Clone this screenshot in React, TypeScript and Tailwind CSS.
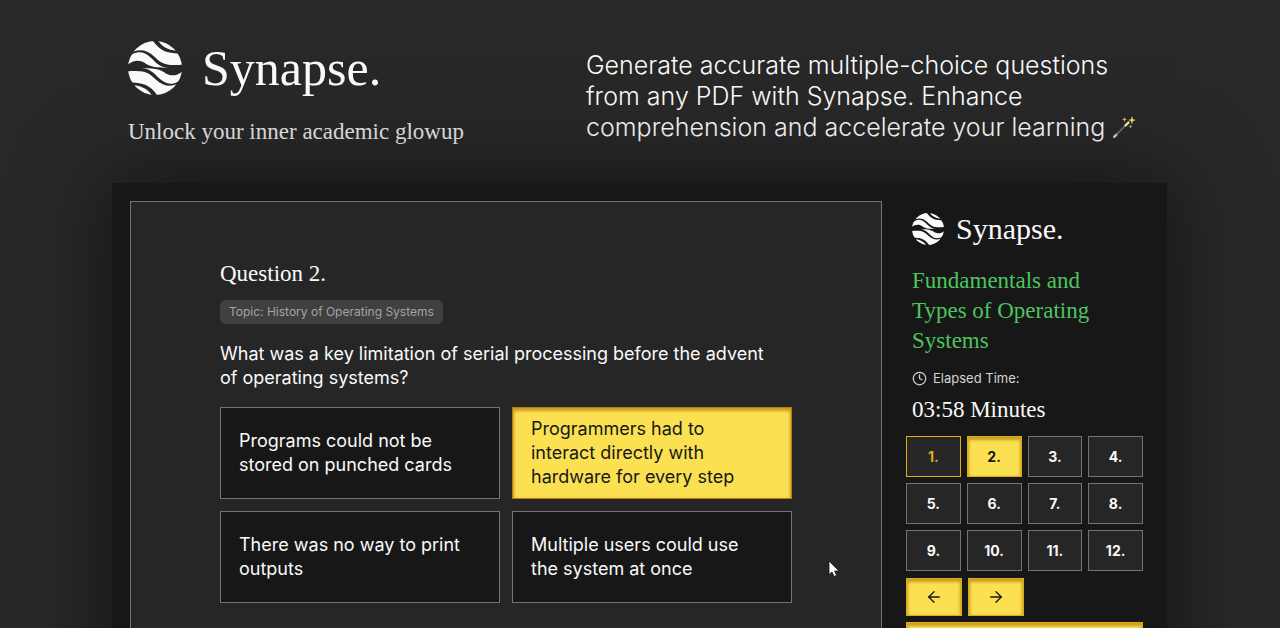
import { useState } from "react";
import { ArrowLeft, ArrowRight, Clock } from "lucide-react";

const serif = "font-['Liberation_Serif',serif]";
const sans = "font-['Inter',sans-serif]";

function Waves() {
  return (
    <>
      <path d="M91 0 C103 17 117 25 142 29 L150 0 Z" />
      <path d="M16 32 C36 24 58 27 77 45 C99 67 111 76 164 71 L164 38 C118 37 98 32 75 0 L16 0 Z" />
      <path d="M0 70 C16 57 36 54 55 69 C73 80 92 80 121 80 C104 79 94 74 81 62 C62 43 50 34 34 34 C22 34 8 40 0 52 Z" />
    </>
  );
}

function LogoMark({ className }: { className: string }) {
  return (
    <svg viewBox="0 0 162 162" className={className} fill="currentColor" aria-hidden="true">
      <defs>
        <clipPath id="globe">
          <circle cx="81" cy="81" r="81" />
        </clipPath>
      </defs>
      <g clipPath="url(#globe)">
        <Waves />
        <g transform="rotate(180 81 81)">
          <Waves />
        </g>
      </g>
    </svg>
  );
}

function Wand() {
  return (
    <svg viewBox="0 0 24 24" className="inline-block size-6 align-[-3px]" role="img" aria-label="magic wand">
      <path d="M2 22 L15 9" stroke="#66666a" strokeWidth="1.8" strokeLinecap="round" />
      <path d="M2.2 21.8 L4.2 19.8" stroke="#c9c9c9" strokeWidth="2.4" strokeLinecap="round" />
      <path d="M13.5 10.5 L16.5 7.5" stroke="#f3e4c4" strokeWidth="2.4" strokeLinecap="round" />
      <path d="M20 1 L21 4.2 L24 5 L21 6 L20 9.5 L19 6 L16 5 L19 4.2 Z" fill="#f7dc5a" />
      <path d="M12.5 2 L13.2 3.8 L15 4.4 L13.2 5 L12.5 7 L11.8 5 L10 4.4 L11.8 3.8 Z" fill="#e5bd42" />
      <path d="M18.5 9.5 L19 11 L20.5 11.5 L19 12 L18.5 13.5 L18 12 L16.5 11.5 L18 11 Z" fill="#e5bd42" />
    </svg>
  );
}

const answers = [
  "Programs could not be stored on punched cards",
  "Programmers had to interact directly with hardware for every step",
  "There was no way to print outputs",
  "Multiple users could use the system at once",
];

const yellow =
  "border border-[#ddae10] bg-[#fbe052] text-neutral-900 shadow-[inset_0_2px_3px_1px_#b47d12b0]";
const yellowDark =
  "border border-[#b87d0c] bg-[#fbe052] text-neutral-900 shadow-[inset_0_2px_3px_1px_#b47d12b0]";

export default function App() {
  const [answer, setAnswer] = useState(1);
  const [current, setCurrent] = useState(2);

  return (
    <div className={`${sans} flex h-screen flex-col overflow-hidden bg-[#282828] pr-[113px] pl-28 text-neutral-50`}>
      <header className="grid shrink-0 grid-cols-[458px_1fr] pt-9 pl-4">
        <div>
          <div className="flex h-16 items-center gap-5">
            <LogoMark className="size-[54px]" />
            <h1 className={`${serif} text-[50px] leading-[64px]`}>Synapse.</h1>
          </div>
          <p className={`${serif} mt-4 text-[23px] leading-8 text-neutral-200`}>Unlock your inner academic glowup</p>
        </div>
        <p className="pt-[14px] text-[25px] leading-[31px] font-light">
          Generate accurate multiple-choice questions
          <br />
          from any PDF with Synapse. Enhance
          <br />
          comprehension and accelerate your learning <Wand />
        </p>
      </header>

      <div className="mt-[35px] flex min-h-[640px] shrink-0 bg-[#171717] px-[18px] pt-[18px] shadow-[0_0_80px_4px_rgba(0,0,0,0.5)]">
        <main className="relative flex-1 border border-[#737373] bg-[#262626] px-[89px] pt-14">
          <h2 className={`${serif} text-[23px] leading-8`}>Question 2.</h2>
          <p className="mt-[10px] w-fit rounded-md bg-[#404040] px-[9px] text-xs leading-6 text-[#a3a3a3]">
            Topic: History of Operating Systems
          </p>
          <p className="mt-[18px] pr-3 text-lg leading-6">
            What was a key limitation of serial processing before the advent of operating systems?
          </p>
          <div className="mt-[17px] grid auto-rows-[92px] grid-cols-2 gap-3">
            {answers.map((text, i) => (
              <button
                key={text}
                type="button"
                aria-pressed={answer === i}
                onClick={() => setAnswer(i)}
                className={`flex items-center pr-8 pl-[18px] text-left text-lg leading-6 ${
                  answer === i ? yellowDark : "border border-[#737373] bg-[#171717]"
                }`}
              >
                {text}
              </button>
            ))}
          </div>
          <svg viewBox="0 0 12 18" className="absolute top-[358px] right-[41px] h-[18px] w-3" aria-hidden="true">
            <path d="M1 1 V14.5 L4 12 L6.2 16.5 L8.6 15.3 L6.6 11 H11 Z" fill="#fff" stroke="#111" strokeWidth="0.8" />
          </svg>
        </main>

        <aside className="w-[267px] shrink-0 pr-[6px] pl-6">
          <div className="px-[6px] pt-2">
            <div className="flex h-10 items-center gap-3">
              <LogoMark className="size-8" />
              <span className={`${serif} text-[30px] leading-10`}>Synapse.</span>
            </div>
            <h3 className={`${serif} mt-[17px] max-w-[190px] text-[23px] leading-[30px] text-[#4ec460]`}>
              Fundamentals and Types of Operating Systems
            </h3>
            <p className="mt-3 flex items-center gap-[6px] text-[13px] leading-5 text-neutral-300">
              <Clock className="size-[15px]" strokeWidth={2} />
              Elapsed Time:
            </p>
            <p className={`${serif} mt-1 text-[23px] leading-9`}>03:58 Minutes</p>
          </div>
          <nav aria-label="Questions" className="mt-2 grid grid-cols-4 gap-[6px]">
            {Array.from({ length: 12 }, (_, i) => i + 1).map((n) => (
              <button
                key={n}
                type="button"
                onClick={() => setCurrent(n)}
                className={`h-[41px] text-sm font-bold ${
                  n === current
                    ? yellow
                    : n === 1
                      ? "border border-[#ddae10] bg-[#262626] text-[#ddae10]"
                      : "border border-[#737373] bg-[#262626]"
                }`}
              >
                {n}.
              </button>
            ))}
          </nav>
          <div className="mt-[7px] flex gap-[6px]">
            <button
              type="button"
              aria-label="Previous question"
              onClick={() => setCurrent(Math.max(1, current - 1))}
              className={`flex h-[38px] w-14 items-center justify-center ${yellow}`}
            >
              <ArrowLeft className="size-[18px]" strokeWidth={1.75} />
            </button>
            <button
              type="button"
              aria-label="Next question"
              onClick={() => setCurrent(Math.min(12, current + 1))}
              className={`flex h-[38px] w-14 items-center justify-center ${yellow}`}
            >
              <ArrowRight className="size-[18px]" strokeWidth={1.75} />
            </button>
          </div>
          <button type="button" aria-label="Submit answers" className={`mt-[6px] h-10 w-full ${yellow}`} />
        </aside>
      </div>
    </div>
  );
}
